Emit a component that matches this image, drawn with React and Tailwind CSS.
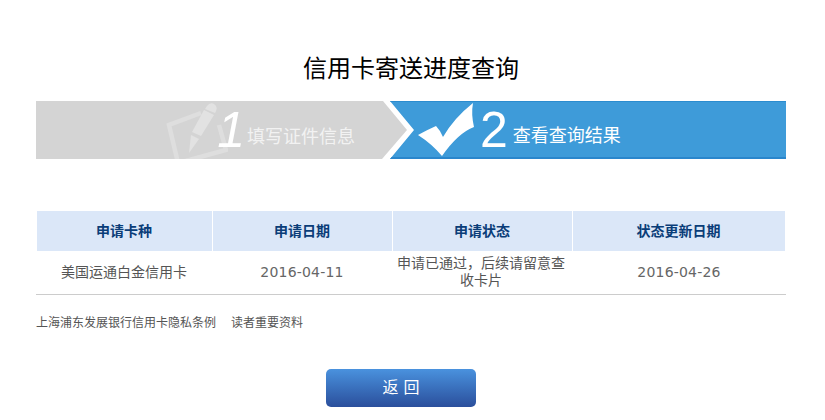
import React from 'react';

const cjk = "font-['DejaVu_Sans','Noto_Sans_CJK_SC',sans-serif]";

// 铅笔图标
function PencilIcon() {
  return (
    <svg width="62" height="58" viewBox="0 0 62 58" className="shrink-0">
      <path d="M35 12 L3 24 L12 62 L60 49 L53 24" fill="none" stroke="#dedede" strokeWidth="4.5" />
      <path d="M41 5 Q44 1 48 3 Q52 6 50 10 L49 12 L39 8 Z" fill="#e2e2e2" />
      <path d="M38 9 L48 14 L35 35 L26 31 Z" fill="#e2e2e2" />
      <path d="M25 34 L33 38 L23 52 Z" fill="#e2e2e2" />
    </svg>
  );
}

// 对勾图标
function CheckIcon() {
  return (
    <svg width="60" height="56" viewBox="0 0 60 56" className="shrink-0">
      <path
        d="M0 33 Q11 27 18 24 Q22 28 25 35 Q36 16 55 1 Q53 12 56 25 Q40 31 24 54 Q14 42 0 33 Z"
        fill="#ffffff"
      />
    </svg>
  );
}

function StepBar() {
  return (
    <div className="flex h-[58px]">
      <div className="flex h-full w-[371px] shrink-0 items-center justify-end overflow-hidden bg-[#d4d4d4] pr-[52px] [clip-path:polygon(0_0,347px_0,371px_50%,346px_100%,0_100%)]">
        <div className="-mr-[11px]">
          <PencilIcon />
        </div>
        <span className="mr-[2px] font-['Liberation_Sans',sans-serif] text-[50px] leading-none text-white italic">1</span>
        <span className={`mt-[12px] text-[18px] whitespace-nowrap text-[#f2f2f2] ${cjk}`}>填写证件信息</span>
      </div>
      <div className="-ml-[17px] flex h-full flex-1 items-center border-t border-b-2 border-t-[#2b8ccf] border-b-[#2a86cc] bg-[#3e9bd9] pl-[28px] [clip-path:polygon(0_0,100%_0,100%_100%,0_100%,24px_50%)]">
        <CheckIcon />
        <span className="ml-[2px] font-['Liberation_Sans',sans-serif] text-[50px] leading-none text-white">2</span>
        <span className={`mt-[12px] ml-[5px] text-[18px] whitespace-nowrap text-white ${cjk}`}>查看查询结果</span>
      </div>
    </div>
  );
}

function App() {
  const heads = ['申请卡种', '申请日期', '申请状态', '状态更新日期'];
  return (
    <div className={`h-[420px] w-[825px] overflow-hidden bg-white pr-[39px] pl-9 ${cjk}`}>
      <h1 className="pt-[51px] pb-[13px] text-center text-2xl leading-[37px] text-black">信用卡寄送进度查询</h1>
      <StepBar />

      <div className="mt-[52px] grid grid-cols-[177px_180px_180px_1fr] border-b border-[#cccccc]">
        {heads.map((h) => (
          <div
            key={h}
            className="flex h-[40px] items-center justify-center border-r border-white bg-[#dbe7f8] pr-px text-sm font-bold text-[#0a3d78] last:border-r-0 first:ml-px"
          >
            {h}
          </div>
        ))}
        <div className="flex h-[43px] items-center justify-center pr-px pb-[2px] text-sm text-[#555555]">美国运通白金信用卡</div>
        <div className="flex items-center justify-center pr-[2px] pb-[2px] text-sm tracking-[0.2px] text-[#666666]">2016-04-11</div>
        <div className="flex items-center justify-center pr-1 pb-[2px] text-center text-sm leading-[17px] text-[#555555]">
          申请已通过，后续请留意查收卡片
        </div>
        <div className="flex items-center justify-center pr-px pb-[2px] text-sm tracking-[0.2px] text-[#666666]">2016-04-26</div>
      </div>

      <div className="mt-[20px] flex gap-[15px] text-xs leading-[17px] text-[#555555]">
        <span>上海浦东发展银行信用卡隐私条例</span>
        <span>读者重要资料</span>
      </div>

      <div className="mt-[37px] flex justify-center pr-5">
        <button
          type="button"
          className="h-[38px] w-[150px] rounded-[5px] bg-gradient-to-b from-[#4a92de] to-[#2b4f9c] text-base text-white"
        >
          返 回
        </button>
      </div>
    </div>
  );
}

export default App;
